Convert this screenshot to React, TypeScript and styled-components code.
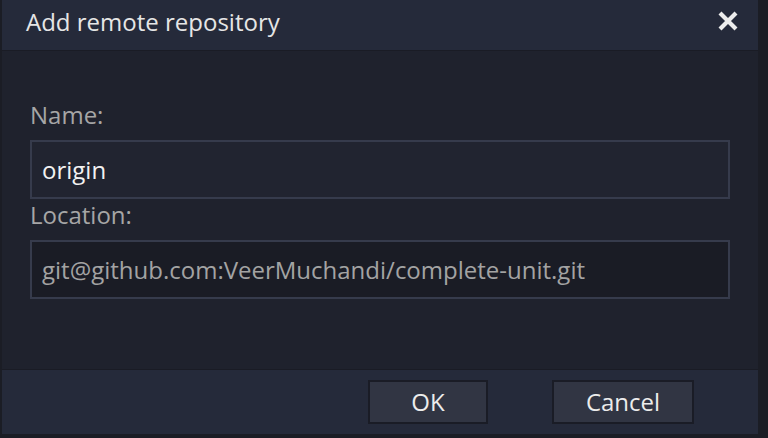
import React from "react";
import styled, { createGlobalStyle } from "styled-components";

const Global = createGlobalStyle`
  html, body { margin: 0; padding: 0; background: #1b1d25; }
  body { font-family: "Open Sans", "Noto Sans", sans-serif; }
  #root { width: 768px; height: 438px; }
`;

const Screen = styled.div`
  width: 768px;
  height: 438px;
  display: flex;
  padding: 0 10px 4px 2px;
  box-sizing: border-box;
  background: #1b1d25;
`;

const Dialog = styled.div`
  flex: 1;
  display: flex;
  flex-direction: column;
  background: #1f222d;
`;

const Header = styled.div`
  box-sizing: content-box;
  height: 42px;
  display: flex;
  align-items: center;
  justify-content: space-between;
  padding: 0 18px 8px 24px;
  background: #252a3a;
  border-bottom: 1px solid #1a1c25;
`;

const Title = styled.h1`
  margin: 0;
  font-size: 24px;
  font-weight: 400;
  color: #e6e6e6;
  line-height: 33px;
`;

const CloseButton = styled.button`
  width: 24px;
  height: 24px;
  padding: 0;
  border: none;
  background: transparent;
  display: flex;
  align-items: center;
  justify-content: center;
  cursor: pointer;
`;

const Body = styled.div`
  flex: 1;
  display: flex;
  flex-direction: column;
  padding: 48px 28px 0 28px;
`;

const Label = styled.label`
  font-size: 24px;
  color: #a6a6a6;
  line-height: 31px;
  height: 41px;
`;

const Field = styled.div<{ $dark?: boolean }>`
  height: 59px;
  box-sizing: border-box;
  display: flex;
  align-items: center;
  padding: 0 10px;
  border: 2px solid #363b4c;
  background: ${(p) => (p.$dark ? "#1a1c25" : "#212430")};
  color: ${(p) => (p.$dark ? "#a3a3a3" : "#f2f2f2")};
  font-size: 24px;
`;

const Footer = styled.div`
  height: 64px;
  display: flex;
  align-items: center;
  justify-content: flex-end;
  gap: 64px;
  padding-right: 64px;
  background: #252a3a;
  border-top: 1px solid #1a1c25;
`;

const Button = styled.button<{ $w: number }>`
  width: ${(p) => p.$w}px;
  height: 44px;
  background: #313543;
  border: 2px solid #1a1c26;
  color: #ececec;
  font-family: "Open Sans", "Noto Sans", sans-serif;
  font-size: 24px;
  line-height: 1;
  padding: 0;
`;

export default function App() {
  return (
    <>
      <Global />
      <Screen>
        <Dialog>
          <Header>
            <Title>Add remote repository</Title>
            <CloseButton aria-label="Close">
              <svg width="22" height="22" viewBox="0 0 22 22">
                <path d="M3 3 L19 19 M19 3 L3 19" stroke="#ededed" strokeWidth="4.2" strokeLinecap="butt" />
              </svg>
            </CloseButton>
          </Header>
          <Body>
            <Label>Name:</Label>
            <Field>origin</Field>
            <Label>Location:</Label>
            <Field $dark>git@github.com:VeerMuchandi/complete-unit.git</Field>
          </Body>
          <Footer>
            <Button $w={120}>OK</Button>
            <Button $w={142}>Cancel</Button>
          </Footer>
        </Dialog>
      </Screen>
    </>
  );
}
